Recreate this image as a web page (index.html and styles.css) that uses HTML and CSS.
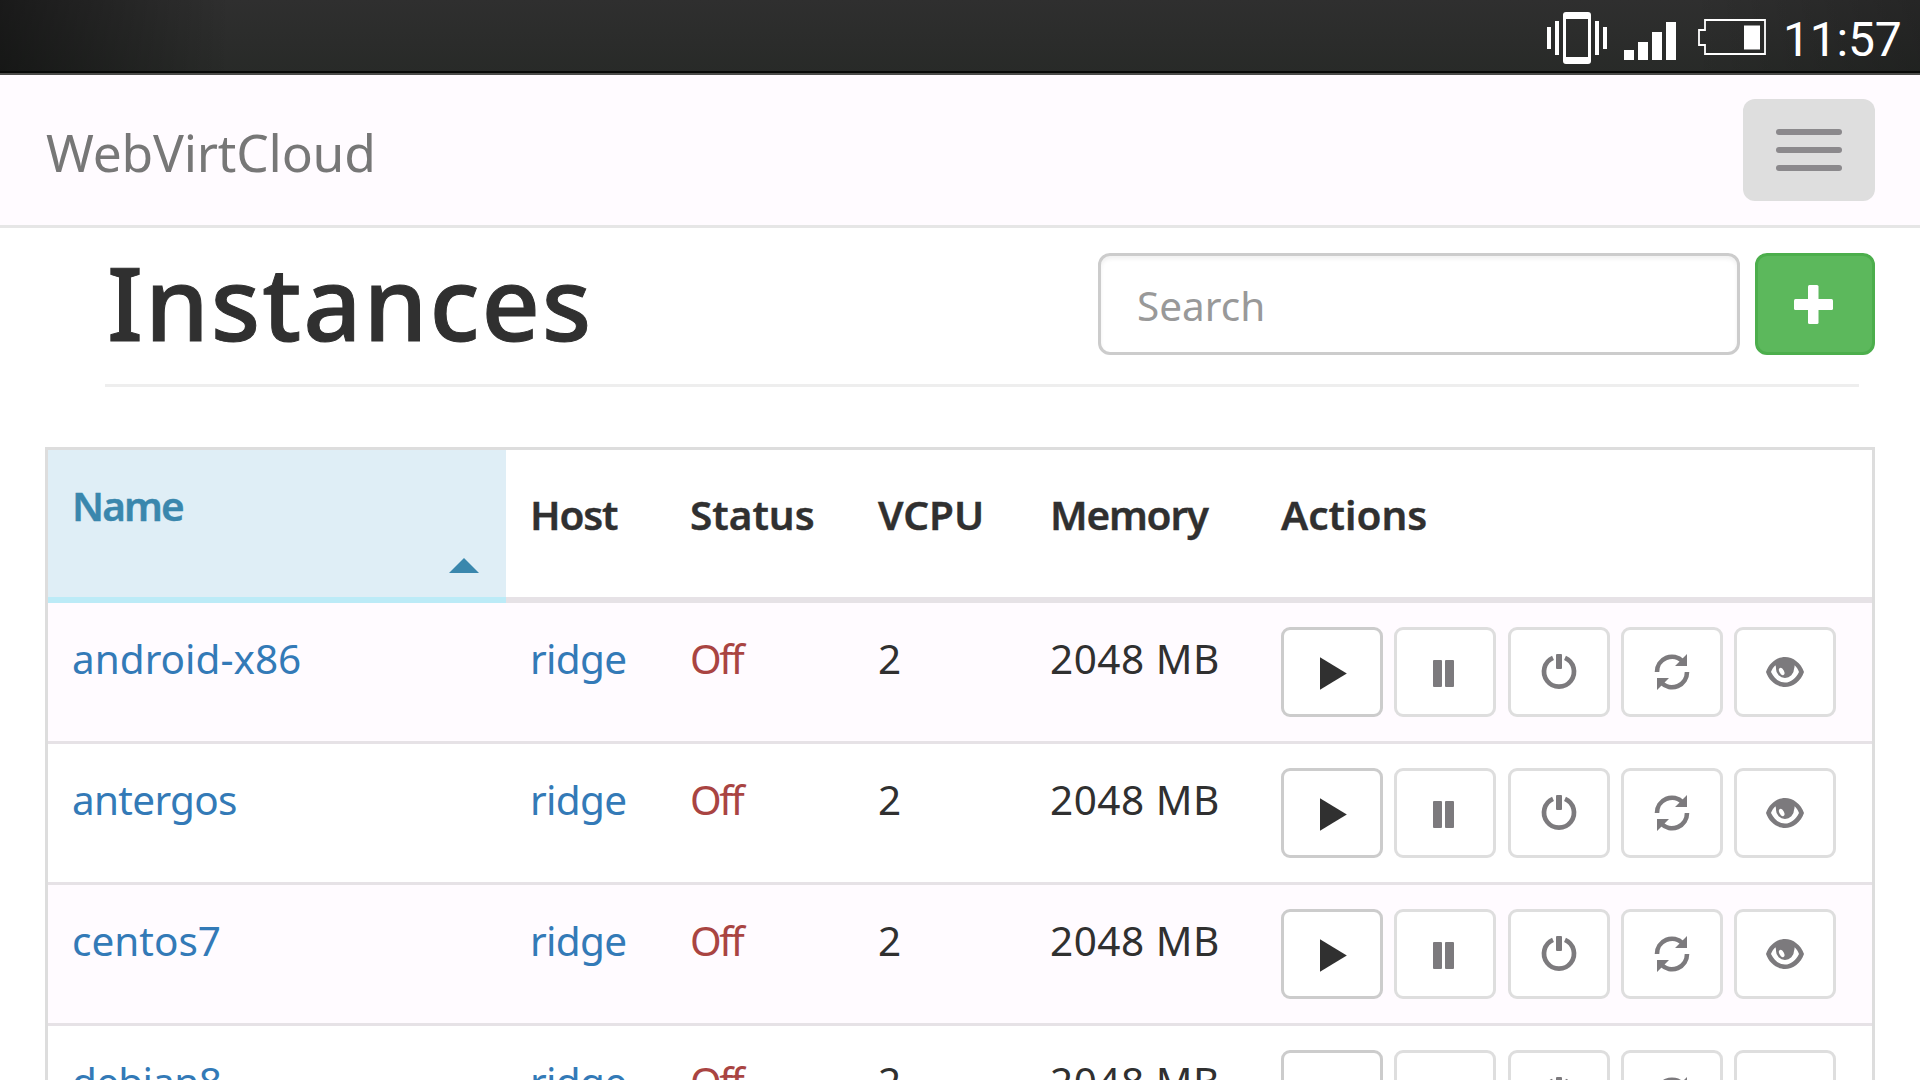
FILE: index.html
```
<!DOCTYPE html>
<html lang="en">
<head>
<meta charset="utf-8">
<title>WebVirtCloud</title>
<link rel="stylesheet" href="styles.css">
</head>
<body>
<svg class="sprite" aria-hidden="true">
  <symbol id="play" viewBox="0 0 96 84"><path d="M36 27.3 62.8 43.4 36 59.7z"/></symbol>
  <symbol id="pause" viewBox="0 0 96 84"><rect x="36" y="30" width="9" height="27" rx="1"/><rect x="48" y="30" width="9" height="27" rx="1"/></symbol>
  <symbol id="power" viewBox="0 0 96 84"><path d="M42 27.9a15 15 0 1 0 12 0" fill="none" stroke="currentColor" stroke-width="4.7"/><rect x="45" y="24" width="6" height="15" rx="1"/></symbol>
  <symbol id="refresh" viewBox="0 0 96 84"><path d="M33 42a15 15 0 0 1 25.7-10.7M63 42a15 15 0 0 1-25.7 10.7" fill="none" stroke="currentColor" stroke-width="4.6"/><path d="M63 24v12H51zM33 60V48h12z"/></symbol>
  <symbol id="eye" viewBox="0 0 96 84"><path fill-rule="evenodd" d="M29 42C32 33 40 27 48 27s16 6 19 15c-3 9-11 15-19 15S32 51 29 42zm5 0c3 6 8 10.600 14 10.600S59 48 62 42c-1-2.800-2.400-5-4.400-6.800A10 10 0 0 1 57 39a9 9 0 0 1-18 0c0-1.400.1-2.600-.6-3.800C36.400 37 35 39.200 34 42z"/><ellipse cx="44.700" cy="41.500" rx="2.300" ry="3.900" transform="rotate(-28 44.700 41.500)" fill="#fff"/></symbol>
</svg>

<div class="statusbar">
  <svg class="indicators" width="220" height="71" viewBox="1547 0 220 71" fill="#fff">
    <path d="M1547 27h4v22h-4zM1555 21h4v34h-4zM1595 21h4v34h-4zM1603 27h4v22h-4z"/>
    <path fill-rule="evenodd" d="M1566 12h22q3 0 3 3v46q0 3-3 3h-22q-3 0-3-3V15q0-3 3-3zm0 7v38h22V19z"/>
    <path d="M1624 50h10v10h-10zM1638 42h10v18h-10zM1652 32h10v28h-10zM1666 22h10v38h-10z"/>
    <path d="M1705 20h60v34h-60v-9h-6V30h6z" fill="none" stroke="#fff" stroke-width="1.800"/>
    <path d="M1744 25.500h16v24h-16z"/>
  </svg>
  <span class="clock">11:57</span>
</div>

<nav class="navbar">
  <a class="brand">WebVirtCloud</a>
  <button class="toggle" aria-label="Menu"><i></i><i></i><i></i></button>
</nav>

<header class="page-header">
  <h1>Instances</h1>
  <div class="tools">
    <input class="search" type="text" placeholder="Search">
    <button class="add" aria-label="Add"><svg width="39" height="39" viewBox="0 0 39 39" fill="#fff"><rect x="14" width="10.500" height="39" rx="1.500"/><rect y="14" width="39" height="11" rx="1.500"/></svg></button>
  </div>
</header>
<hr class="rule">

<table class="instances">
  <colgroup><col class="c-name"><col class="c-host"><col class="c-status"><col class="c-vcpu"><col class="c-memory"><col class="c-actions"></colgroup>
  <thead>
    <tr><th class="sorted">Name<span class="arrow"></span></th><th class="snug">Host</th><th>Status</th><th>VCPU</th><th class="snug">Memory</th><th>Actions</th></tr>
  </thead>
  <tbody>
    <tr>
      <td><a>android-x86</a></td><td><a class="host">ridge</a></td><td class="off">Off</td><td>2</td><td class="mem">2048 MB</td>
      <td><div class="actions"><button class="on"><svg><use href="#play"/></svg></button><button><svg><use href="#pause"/></svg></button><button><svg><use href="#power"/></svg></button><button><svg><use href="#refresh"/></svg></button><button><svg><use href="#eye"/></svg></button></div></td>
    </tr>
    <tr>
      <td><a class="host">antergos</a></td><td><a class="host">ridge</a></td><td class="off">Off</td><td>2</td><td class="mem">2048 MB</td>
      <td><div class="actions"><button class="on"><svg><use href="#play"/></svg></button><button><svg><use href="#pause"/></svg></button><button><svg><use href="#power"/></svg></button><button><svg><use href="#refresh"/></svg></button><button><svg><use href="#eye"/></svg></button></div></td>
    </tr>
    <tr>
      <td><a>centos7</a></td><td><a class="host">ridge</a></td><td class="off">Off</td><td>2</td><td class="mem">2048 MB</td>
      <td><div class="actions"><button class="on"><svg><use href="#play"/></svg></button><button><svg><use href="#pause"/></svg></button><button><svg><use href="#power"/></svg></button><button><svg><use href="#refresh"/></svg></button><button><svg><use href="#eye"/></svg></button></div></td>
    </tr>
    <tr>
      <td><a class="host">debian8</a></td><td><a class="host">ridge</a></td><td class="off">Off</td><td>2</td><td class="mem">2048 MB</td>
      <td><div class="actions"><button class="on"><svg><use href="#play"/></svg></button><button><svg><use href="#pause"/></svg></button><button><svg><use href="#power"/></svg></button><button><svg><use href="#refresh"/></svg></button><button><svg><use href="#eye"/></svg></button></div></td>
    </tr>
  </tbody>
</table>
</body>
</html>
```
FILE: styles.css
```
* { box-sizing: border-box; }
html, body { height: 1080px; overflow: hidden; }
body {
  margin: 0;
  background: #fff;
  color: #303030;
  font-family: "Noto Sans", sans-serif;
  font-size: 40.5px;
  line-height: 60px;
}
button, input { font: inherit; margin: 0; padding: 0; }
.sprite { display: none; }

.statusbar {
  height: 75px;
  display: flex;
  align-items: flex-start;
  justify-content: flex-end;
  padding-right: 19px;
  background: linear-gradient(90deg, rgba(0,0,0,.45), rgba(0,0,0,0) 12%, rgba(0,0,0,0) 88%, rgba(0,0,0,.2)), linear-gradient(#2f2f2f, #282a28);
  border-bottom: 2px solid #4a4a48;
  box-shadow: inset 0 -2px 0 #080a08;
}
.clock {
  width: 118px;
  margin-left: 16px;
  padding-top: 4px;
  font: 48px/71px Roboto, sans-serif;
  letter-spacing: -.2px;
  color: #fff;
  white-space: nowrap;
}

.navbar {
  height: 153px;
  display: flex;
  align-items: center;
  justify-content: space-between;
  padding: 0 45px 0 46px;
  background: #fffbff;
  border-bottom: 3px solid #e6e6e6;
}
.brand {
  padding-top: 4px;
  font-size: 51.5px;
  letter-spacing: -.2px;
  color: #777;
}
.toggle {
  width: 132px;
  height: 102px;
  display: flex;
  flex-direction: column;
  align-items: center;
  justify-content: center;
  gap: 12px;
  border: 0;
  border-radius: 12px;
  background: #dedede;
}
.toggle i { width: 66px; height: 6px; border-radius: 3px; background: #8b898c; }

.page-header {
  height: 156px;
  display: flex;
  justify-content: space-between;
  padding: 25px 45px 0 107px;
}
h1 {
  margin: 0;
  font-size: 102px;
  font-weight: 500;
  line-height: 98px;
  letter-spacing: 1.9px;
  -webkit-text-stroke: 1px #303030;
}
.tools { display: flex; gap: 15px; }
.search {
  width: 642px;
  height: 102px;
  padding: 3px 36px 0;
  border: 3px solid #ccc;
  border-radius: 12px;
  background: #fff;
  box-shadow: inset 0 3px 4px rgba(0,0,0,.06);
}
.search::placeholder { color: #999; opacity: 1; }
.add {
  width: 120px;
  height: 102px;
  display: grid;
  place-items: center;
  padding-right: 3px;
  border: 3px solid #4cae4c;
  border-radius: 12px;
  background: #5cb85c;
}
.rule { width: 1754px; height: 3px; margin: 0 0 60px 105px; border: 0; background: #eee; }

.instances {
  width: 1830px;
  margin-left: 45px;
  table-layout: fixed;
  border: 3px solid #ddd;
  border-collapse: separate;
  border-spacing: 0;
}
.c-name { width: 458px; }
.c-host { width: 160px; }
.c-status { width: 188px; }
.c-vcpu { width: 172px; }
.c-memory { width: 231px; }
.c-actions { width: 615px; }
th, td { padding: 26px 0 0 24px; text-align: left; vertical-align: top; white-space: nowrap; }
th {
  height: 153px;
  padding-top: 35px;
  border-bottom: 6px solid #e6e2e6;
  font-weight: 600;
  -webkit-text-stroke: .4px;
}
.snug { letter-spacing: -1.2px; }
.sorted {
  padding-top: 26px;
  background: #dfeef6;
  border-color: #bcebf7;
  color: #3a87ad;
  letter-spacing: -1.9px;
}
.arrow {
  display: block;
  width: 30px;
  margin: 22px 27px 0 auto;
  border: solid transparent;
  border-width: 0 15px 15px;
  border-bottom-color: #3a87ad;
}
td { height: 141px; border-bottom: 3px solid #e6e2e6; }
tbody tr:nth-child(odd) { background: #fffbff; }
a { color: #337ab7; }
.host { letter-spacing: -.7px; }
.mem { letter-spacing: .5px; }
.off { color: #a94442; letter-spacing: -2.4px; }
td:last-child { padding-top: 24px; }
.actions { display: flex; gap: 11.3px; }
.actions button {
  width: 102px;
  height: 90px;
  border: 3px solid #dedede;
  border-radius: 9px;
  background: #fff;
  color: #7c7a7d;
}
.actions .on { border-color: #ccc; color: #303030; }
.actions svg { display: block; width: 96px; height: 84px; fill: currentColor; }
```
